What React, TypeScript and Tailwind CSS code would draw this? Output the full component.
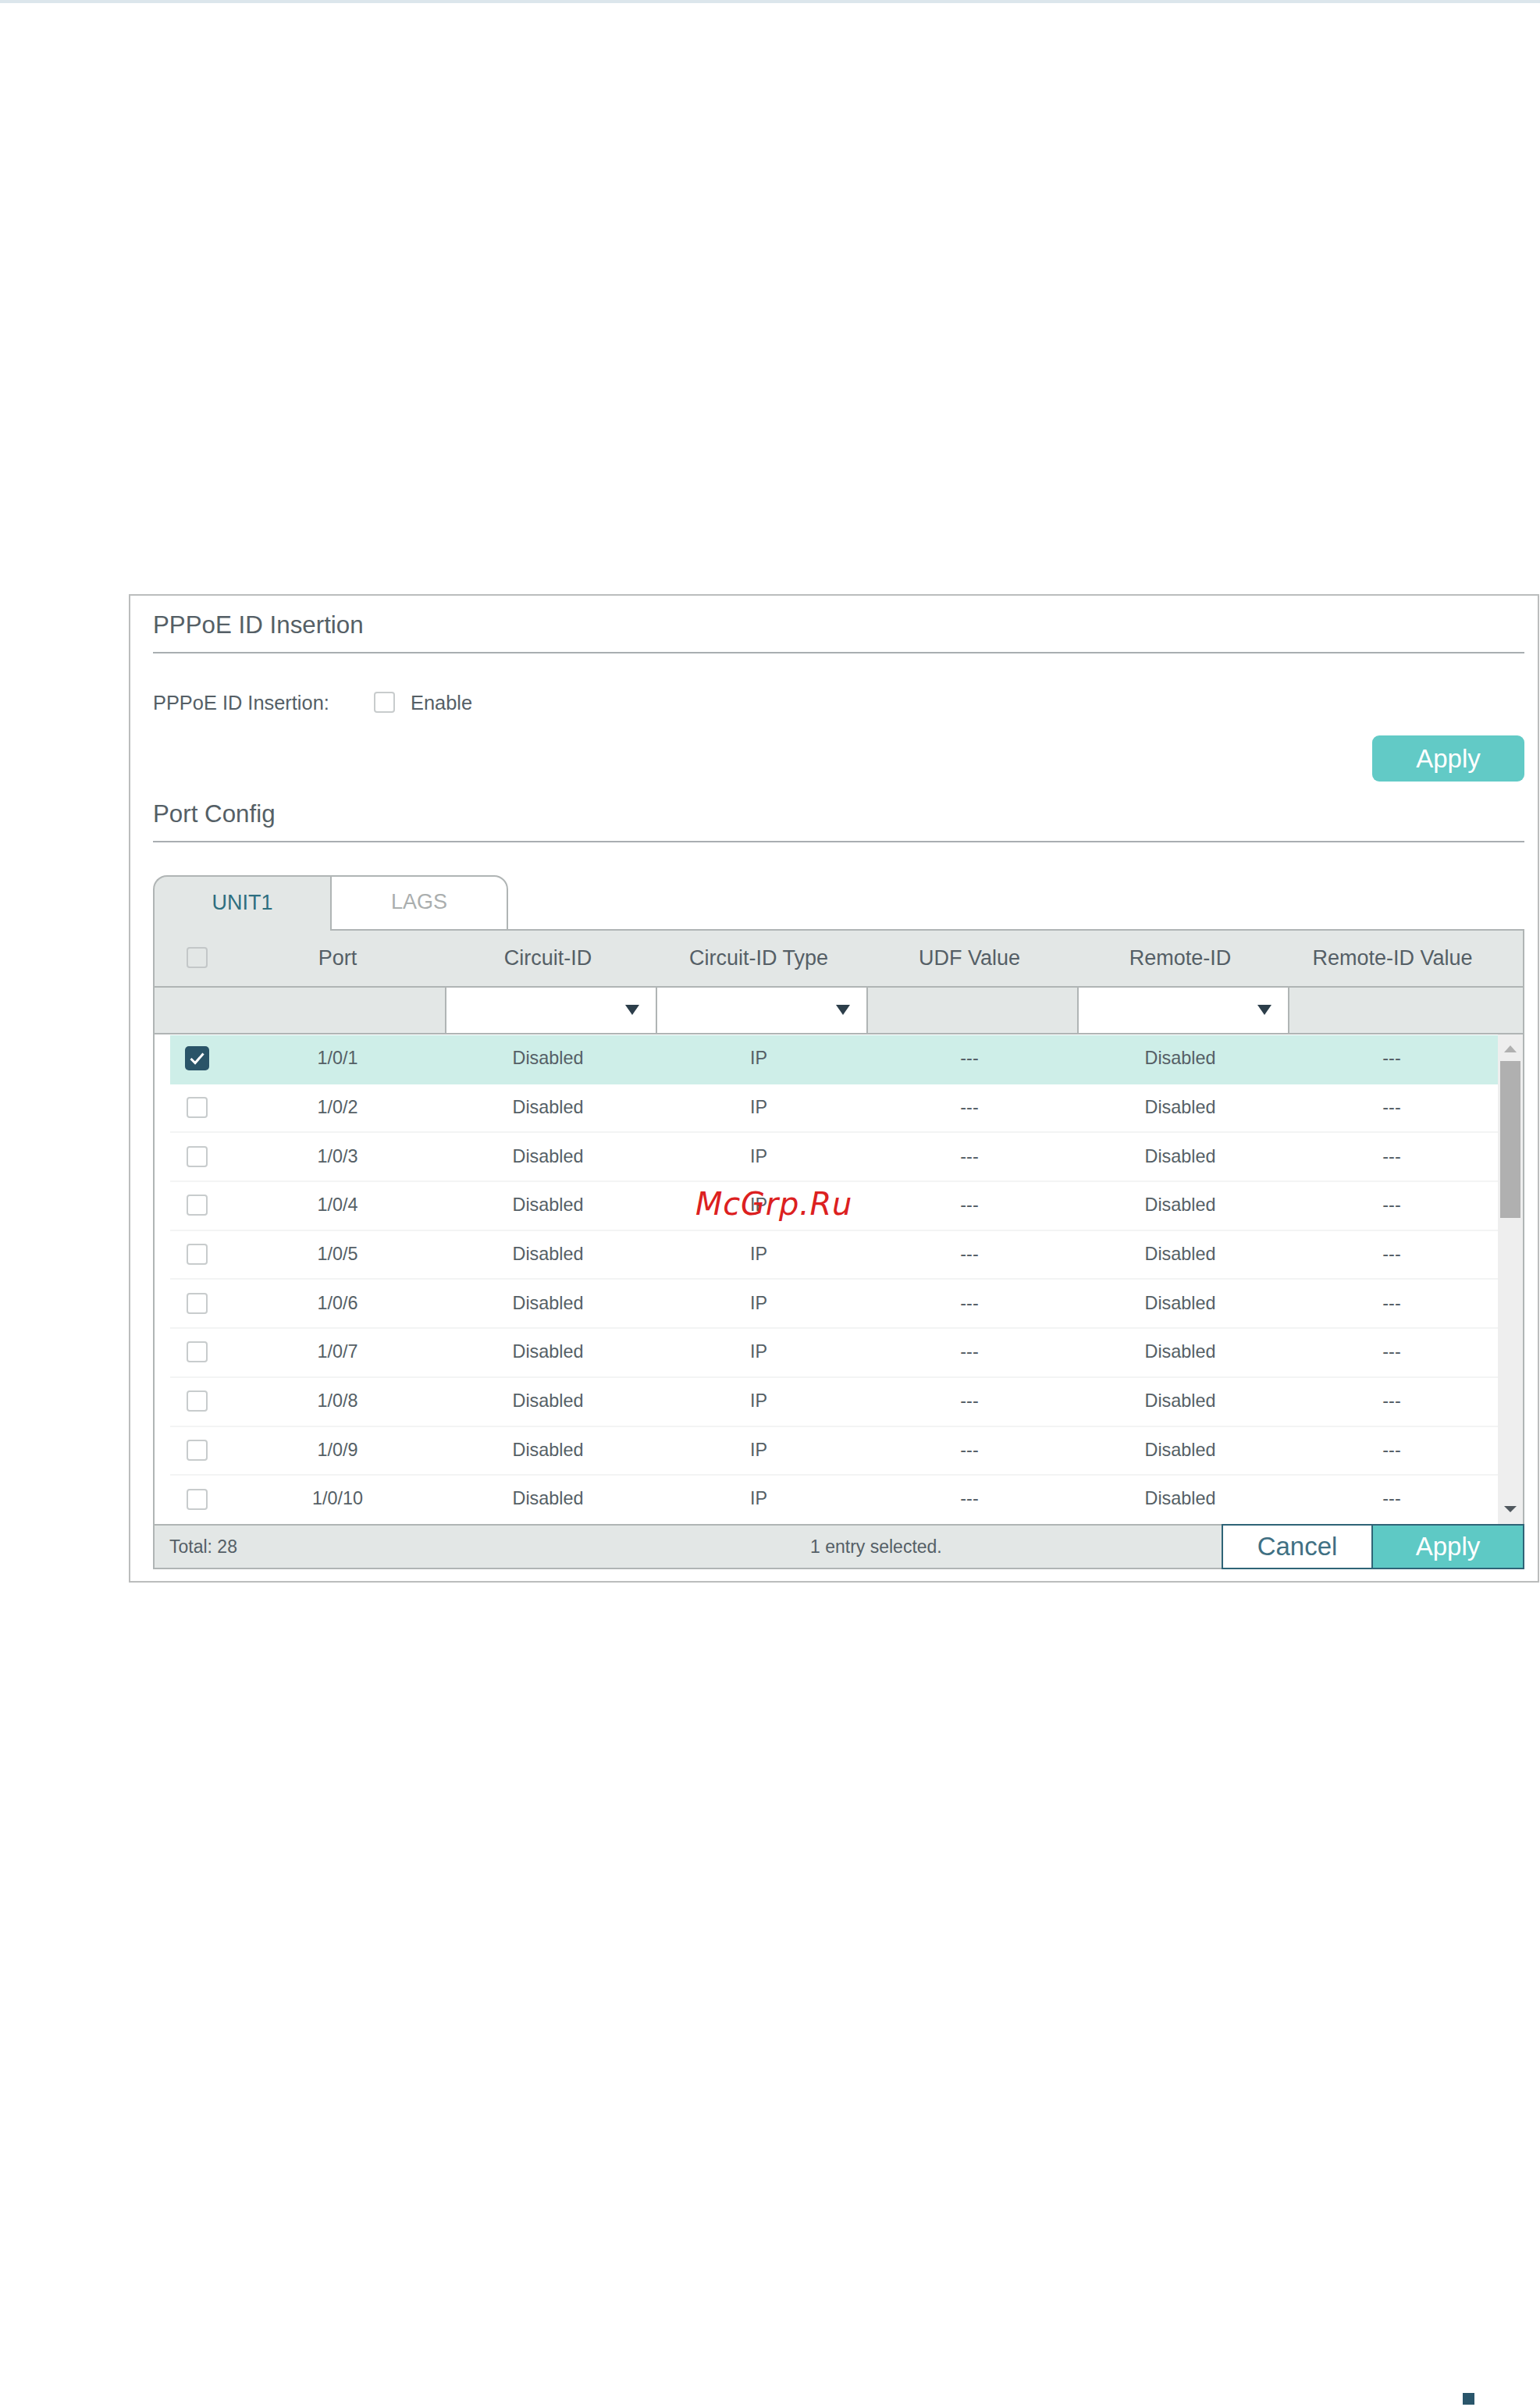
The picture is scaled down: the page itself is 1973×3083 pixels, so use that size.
const rows = ["1/0/1", "1/0/2", "1/0/3", "1/0/4", "1/0/5", "1/0/6", "1/0/7", "1/0/8", "1/0/9", "1/0/10"]
const headers = ["Port", "Circuit-ID", "Circuit-ID Type", "UDF Value", "Remote-ID", "Remote-ID Value"]

function Checkbox() {
  return <span className="block w-[27px] h-[27px] rounded-[4px] border-2 border-[#c8cccd] bg-white" />
}

function CheckedBox() {
  return (
    <span className="flex items-center justify-center w-[31px] h-[31px] rounded-[5px] bg-[#2a5468]">
      <svg width="21" height="17" viewBox="0 0 21 17" fill="none">
        <path d="M2.5 9 L8 14.5 L18.5 2.5" stroke="#fff" strokeWidth="3" />
      </svg>
    </span>
  )
}

function SelectCell() {
  return (
    <div className="flex items-center justify-end bg-white border-l-2 border-[#b0b5b5] pr-[21px] pb-[1px]">
      <svg width="18" height="13" viewBox="0 0 18 13">
        <path d="M0 0 H18 L9 13 Z" fill="#2c3e4a" />
      </svg>
    </div>
  )
}

function SectionTitle({ title, className }: { title: string; className: string }) {
  return (
    <div className={`border-b-2 border-[#a9aeb1] text-[31.3px] leading-[36px] text-[#555f66] ${className}`}>{title}</div>
  )
}

export default function App() {
  return (
    <div className="min-h-[3083px] bg-white font-['Liberation_Sans',sans-serif] text-[#555f66]">
      <div className="h-[4px] bg-[#dce6ec]" />

      <div className="ml-[165px] mt-[757px] w-[1807px] border-2 border-[#bbbdbd] pl-[29px] pr-[17px] pb-[15px]">
        <SectionTitle title="PPPoE ID Insertion" className="h-[74px] pt-[20px]" />

        <div className="mt-[49px] flex h-[27px] items-center text-[25.4px]">
          <span className="w-[283px] pt-[2px]">PPPoE ID Insertion:</span>
          <Checkbox />
          <span className="ml-[20px] pt-[2px]">Enable</span>
        </div>

        <div className="mt-[29px] flex justify-end">
          <button className="h-[59px] w-[195px] rounded-[9px] bg-[#62cac6] text-[33px] text-white">Apply</button>
        </div>

        <SectionTitle title="Port Config" className="h-[78px] pt-[24px]" />

        {/* Tabs */}
        <div className="mt-[42px] flex h-[71px] text-[27px]">
          <div className="flex w-[227px] items-center justify-center rounded-tl-[18px] border-l-2 border-t-2 border-[#b0b5b5] bg-[#e3e7e6] pb-[2px] text-[#2e6f80]">
            UNIT1
          </div>
          <div className="flex w-[228px] items-center justify-center rounded-tr-[18px] border-2 border-[#b0b5b5] pb-[2px] text-[#aaaeae]">
            LAGS
          </div>
          <div className="flex-1 border-b-2 border-[#b0b5b5]" />
        </div>

        {/* Table header */}
        <div className="grid h-[73px] grid-cols-[20px_80px_269px_270px_270px_270px_270px_274px_1fr] items-center border-x-2 border-b-2 border-[#b0b5b5] bg-[#e3e7e6] text-center text-[27px]">
          <div />
          <div className="flex justify-center pr-[12px] pb-[3px]">
            <span className="block h-[27px] w-[27px] rounded-[4px] border-2 border-[#c3c7c8]" />
          </div>
          {headers.map((h) => (
            <div key={h} className="whitespace-nowrap">
              {h}
            </div>
          ))}
        </div>

        {/* Filter row */}
        <div className="grid h-[60px] grid-cols-[372px_270px_270px_270px_270px_1fr] border-x-2 border-b-2 border-[#b0b5b5] bg-[#e3e7e6]">
          <div />
          <SelectCell />
          <SelectCell />
          <div className="border-l-2 border-[#b0b5b5]" />
          <SelectCell />
          <div className="border-l-2 border-[#b0b5b5]" />
        </div>

        {/* Rows with scrollbar */}
        <div className="relative flex h-[627px] border-x-2 border-[#b0b5b5] bg-white">
          <div className="flex-1 overflow-hidden pl-[20px] pt-[1px]">
            {rows.map((port, i) => (
              <div
                key={port}
                className={`grid h-[62.7px] grid-cols-[80px_269px_270px_270px_270px_270px_1fr] items-center border-b-2 pb-[1px] text-center text-[23.4px] ${
                  i === 0 ? "border-[#ceeee8] bg-[#ceeee8]" : "border-[#f3f4f4]"
                } ${i === 9 ? "border-transparent" : ""}`}
              >
                <div className="flex justify-center pr-[12px]">{i === 0 ? <CheckedBox /> : <Checkbox />}</div>
                <div>{port}</div>
                <div>Disabled</div>
                <div>IP</div>
                <div>---</div>
                <div>Disabled</div>
                <div>---</div>
              </div>
            ))}
          </div>

          <div className="flex w-[32px] flex-col items-center bg-[#eeeeee] pt-[14px]">
            <svg width="16" height="9" viewBox="0 0 16 9">
              <path d="M8 0 L16 9 H0 Z" fill="#b0b0b0" />
            </svg>
            <div className="mt-[11px] h-[201px] w-[26px] bg-[#b0b0b0]" />
            <div className="flex-1" />
            <svg width="16" height="8" viewBox="0 0 16 8" className="mb-[15px]">
              <path d="M0 0 H16 L8 8 Z" fill="#50585e" />
            </svg>
          </div>

          {/* watermark */}
          <span className="absolute left-[693px] top-[193px] whitespace-nowrap font-['DejaVu_Sans',sans-serif] text-[40px] italic leading-[48px] tracking-[0.75px] text-[#dc2020]">
            McGrp.Ru
          </span>
        </div>

        {/* Footer */}
        <div className="flex h-[58px] items-center border-2 border-[#b0b5b5] bg-[#e3e7e6] pl-[19px] text-[23px]">
          <span className="w-[821px]">Total: 28</span>
          <span className="flex-1 whitespace-nowrap">1 entry selected.</span>
          <button className="-my-[2px] h-[58px] w-[194px] border-2 border-[#2f6477] bg-white text-[33px] text-[#3f7083]">
            Cancel
          </button>
          <button className="-my-[2px] -mr-[2px] -ml-[2px] h-[58px] w-[196px] border-2 border-[#2f6477] bg-[#5ec9c5] text-[33px] text-white">
            Apply
          </button>
        </div>
      </div>

      <div className="mt-[1038px] flex justify-end pr-[84px]">
        <div className="h-[15px] w-[15px] bg-[#2a566b]" />
      </div>
    </div>
  )
}
